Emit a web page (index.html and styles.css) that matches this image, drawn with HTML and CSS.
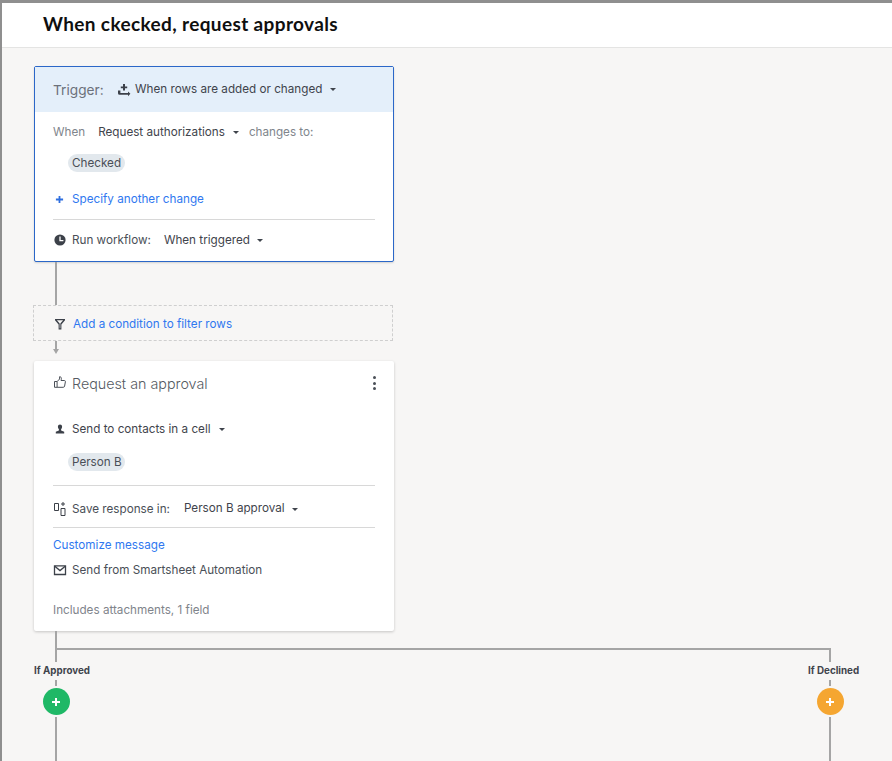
FILE: index.html
```html
<!DOCTYPE html>
<html lang="en">
<head>
<meta charset="utf-8">
<title>When ckecked, request approvals</title>
<link rel="stylesheet" href="styles.css">
</head>
<body>
<div class="frame">
  <header class="header"><h1 class="title">When ckecked, request approvals</h1></header>
  <main class="canvas">
    <section class="card trigger">
      <div class="trigger-head">
        <span class="trigger-label">Trigger:</span>
        <svg class="icon icon-add-rows" viewBox="0 0 14 14"><path d="M6 1h2v2.500h2.200v1.800H8V7.500H6V5.300H3.800V3.500H6z" fill="#3c4149"/><path d="M1 7.500h2.400v2.600h7.600V8.400L13.400 10.800 11 13.200v-1.400H2.600A1.600 1.600 0 0 1 1 10.200z" fill="#3c4149"/></svg>
        <span class="value head-value">When rows are added or changed</span>
        <span class="caret caret-head"></span>
      </div>
      <div class="trigger-body">
        <div class="row row-when">
          <span class="muted">When</span>
          <span class="value when-value">Request authorizations</span>
          <span class="caret caret-when"></span>
          <span class="muted">changes to:</span>
        </div>
        <div class="chip chip-checked">Checked</div>
        <div class="row row-specify">
          <svg class="icon-plus" viewBox="0 0 10 10"><path d="M4 1h2v3h3v2H6v3H4V6H1V4h3z" fill="#2f6fdf"/></svg>
          <a class="link">Specify another change</a>
        </div>
        <hr class="rule rule-trigger">
        <div class="row row-run">
          <svg class="icon" viewBox="0 0 14 14"><circle cx="7" cy="7" r="5.600" fill="#3c4149"/><path d="M7 3.500V7.600h3.400" fill="none" stroke="#fff" stroke-width="1.300"/></svg>
          <span class="label">Run workflow:</span>
          <span class="value run-value">When triggered</span>
          <span class="caret caret-run"></span>
        </div>
      </div>
    </section>
    <div class="line line-top"></div>
    <div class="condition">
      <svg class="icon icon-filter" viewBox="0 0 14 14"><path d="M2 2h10v1.200L8.400 7.400V12.500H5.600V7.400L2 3.200z M3.900 3.200 6.700 6.600V11.300h.6V6.600l2.800-3.400z" fill="#3c4149" fill-rule="evenodd"/></svg>
      <a class="link">Add a condition to filter rows</a>
    </div>
    <div class="line line-arrow"></div>
    <div class="arrow-head"></div>
    <section class="card approval">
      <div class="approval-head">
        <svg class="icon icon-thumb" viewBox="0 0 14 14"><path d="M1.500 6.500h2.600v5.800H1.500z M4.100 6.600 6.600 4V1.700c1.200 0 1.800.8 1.800 1.800 0 .7-.2 1.300-.4 2h3.400c.7 0 1.100.6 1 1.200l-.8 4.400c-.1.7-.6 1.200-1.300 1.200H4.100" fill="none" stroke="#4a4f57" stroke-width="1"/></svg>
        <span class="approval-title">Request an approval</span>
        <span class="kebab"><i></i><i></i><i></i></span>
      </div>
      <div class="row row-send">
        <svg class="icon" viewBox="0 0 14 14"><path d="M7 2.500a2.100 2.100 0 0 1 2.100 2.100c0 1.300-.6 2.200-1 2.700v1.100l3.100 1.300v1.800H2.800v-1.800l3.100-1.300V7.300c-.4-.5-1-1.400-1-2.700A2.100 2.100 0 0 1 7 2.500z" fill="#3c4149"/></svg>
        <span class="value">Send to contacts in a cell</span>
        <span class="caret caret-send"></span>
      </div>
      <div class="chip chip-person">Person B</div>
      <hr class="rule rule-person">
      <div class="row row-save">
        <svg class="icon icon-save" viewBox="0 0 14 16"><path d="M1.500 2.500h4v7h-4z M8 7.500h4v7H8z" fill="none" stroke="#3c4149" stroke-width="1"/><path d="M9.500 1h1v1.500H12v1h-1.500V5h-1V3.500H8v-1h1.500z" fill="#3c4149"/></svg>
        <span class="label save-label">Save response in:</span>
        <span class="value save-value">Person B approval</span>
        <span class="caret caret-save"></span>
      </div>
      <hr class="rule rule-save">
      <a class="link customize">Customize message</a>
      <div class="row row-from">
        <svg class="icon" viewBox="0 0 14 14"><path d="M1.500 2.800h11v8.700h-11z" fill="none" stroke="#3c4149" stroke-width="1.300"/><path d="M1.800 3.200 7 7.600l5.200-4.400" fill="none" stroke="#3c4149" stroke-width="1.300"/></svg>
        <span class="label">Send from Smartsheet Automation</span>
      </div>
      <div class="includes">Includes attachments, 1 field</div>
    </section>
    <div class="line line-stem"></div>
    <div class="hline"></div>
    <div class="branches">
      <div class="branch branch-yes">
        <div class="vseg seg-a"></div>
        <div class="branch-label">If Approved</div>
        <div class="vseg seg-b"></div>
        <div class="add add-green"><svg viewBox="0 0 10 10"><path d="M4 1h2v3h3v2H6v3H4V6H1V4h3z" fill="#fff"/></svg></div>
        <div class="vseg seg-c"></div>
      </div>
      <div class="branch branch-no">
        <div class="vseg seg-a"></div>
        <div class="branch-label">If Declined</div>
        <div class="vseg seg-b"></div>
        <div class="add add-orange"><svg viewBox="0 0 10 10"><path d="M4 1h2v3h3v2H6v3H4V6H1V4h3z" fill="#fff"/></svg></div>
        <div class="vseg seg-c"></div>
      </div>
    </div>
  </main>
</div>
</body>
</html>
```
FILE: styles.css
```css
* { box-sizing: border-box; }
html, body { margin: 0; padding: 0; }
body {
  width: 892px;
  height: 761px;
  overflow: hidden;
  font-family: Inter, "Liberation Sans", sans-serif;
  font-size: 11.7px;
  color: #3f444c;
}
.frame {
  width: 892px;
  height: 761px;
  background: #8f8f8f;
  padding: 3px 0 0 2px;
  display: flex;
  flex-direction: column;
}
.header {
  height: 45px;
  flex: none;
  background: #fff;
  border-bottom: 1px solid #e4e4e3;
  padding-left: 41px;
}
.title {
  margin: 0;
  font-family: Lato, "Liberation Sans", sans-serif;
  font-weight: 700;
  font-size: 19px;
  letter-spacing: .37px;
  line-height: 42px;
  color: #0f0f0f;
}
.canvas {
  flex: 1;
  min-height: 0;
  background: #f7f6f5;
  padding: 18px 0 0 32px;
  overflow: hidden;
}
.card { width: 360px; background: #fff; }
.trigger {
  height: 196px;
  border: 1px solid #2b67c8;
  border-radius: 2px;
  box-shadow: 0 1px 2px rgba(0,0,0,.15);
}
.trigger-head {
  height: 45px;
  background: #e4effa;
  display: flex;
  align-items: center;
  padding-left: 18px;
}
.trigger-label { font-size: 13.7px; color: #6c717a; width: 64px; line-height: 44px; }
.icon { width: 14px; height: 14px; flex: none; display: block; }
.icon-add-rows { margin-right: 4px; }
.head-value { position: relative; top: -1px; }
.value { color: #3f444c; white-space: nowrap; }
.label { color: #4a4f57; white-space: nowrap; }
.muted { color: #80858c; white-space: nowrap; }
.link { color: #2f78f0; white-space: nowrap; }
.caret {
  width: 0; height: 0; flex: none;
  border-left: 3px solid transparent;
  border-right: 3px solid transparent;
  border-top: 3px solid #3f444c;
}
.caret-head { margin-left: 8px; }
.trigger-body { padding: 0 18px; }
.row { display: flex; align-items: center; }
.row-when { height: 20px; margin-top: 10px; }
.when-value { margin-left: 13px; }
.caret-when { margin: 0 10px 0 8px; }
.chip {
  height: 18px;
  line-height: 18px;
  border-radius: 9px;
  background: #e2e8ed;
  padding: 0 4px;
  margin-left: 15px;
  color: #4a4f57;
  white-space: nowrap;
}
.chip-checked { width: 57px; margin-top: 12px; }
.row-specify { height: 20px; margin-top: 17px; }
.icon-plus { width: 9px; height: 9px; margin: 0 8px 0 2px; flex: none; }
.rule { height: 1px; border: 0; margin: 0; background: #d8d8d8; width: 322px; }
.rule-trigger { margin-top: 10px; }
.row-run { height: 20px; margin-top: 10px; }
.row-run .icon { margin-right: 5px; }
.run-value { margin-left: 13px; }
.caret-run { margin-left: 7px; }
.line { width: 2px; background: #a5a5a5; margin-left: 21px; }
.line-top { height: 43px; }
.condition {
  width: 360px;
  height: 36px;
  margin-left: -1px;
  border: 1px dashed #cfcfcf;
  display: flex;
  align-items: center;
  padding: 1px 0 0 19px;
}
.icon-filter { margin-right: 6px; }
.line-arrow { height: 9px; }
.arrow-head {
  width: 0; height: 0;
  margin: -1px 0 7px 19px;
  border-left: 3.5px solid transparent;
  border-right: 3.5px solid transparent;
  border-top: 5px solid #a5a5a5;
}
.approval {
  height: 270px;
  border-radius: 2px;
  box-shadow: 0 1px 3px rgba(0,0,0,.2);
  padding: 0 19px;
}
.approval-head { display: flex; align-items: center; height: 32px; padding-top: 12px; }
.icon-thumb { margin-right: 5px; margin-top: -2px; }
.approval-title { font-size: 14.3px; font-weight: 300; color: #555a62; flex: 1; }
.kebab { display: flex; flex-direction: column; gap: 2.5px; width: 3px; margin-right: -1px; }
.kebab i { display: block; width: 3px; height: 3px; border-radius: 50%; background: #4a4f57; }
.row-send { height: 20px; margin-top: 26px; }
.row-send .icon { margin-right: 5px; }
.caret-send { margin-left: 8px; }
.chip-person { width: 57px; margin-top: 14px; }
.rule-person { margin-top: 14px; }
.row-save { height: 20px; margin-top: 13px; }
.icon-save { height: 16px; margin-right: 5px; }
.save-value { margin-left: 14px; position: relative; top: -1px; }
.caret-save { margin-left: 7px; }
.rule-save { margin-top: 8px; }
.customize { display: block; margin-top: 8px; line-height: 18px; }
.row-from { height: 20px; margin-top: 6px; }
.row-from .icon { margin-right: 5px; }
.includes { margin-top: 20px; color: #7f848b; line-height: 20px; }
.line-stem { height: 17px; }
.hline { width: 776px; height: 2px; margin-left: 21px; background: #a5a5a5; }
.branches { display: flex; justify-content: space-between; width: 826px; }
.branch { display: flex; flex-direction: column; height: 120px; }
.branch-yes { width: 57px; }
.branch-no { width: 52px; }
.vseg { width: 2px; background: #a5a5a5; flex: none; margin-left: 21px; }
.seg-a { height: 12px; }
.seg-b { height: 6px; margin-bottom: 2px; }
.seg-c { height: 60px; margin-top: 2px; }
.branch-label { font-size: 9.8px; font-weight: 700; line-height: 18px; color: #3f444c; white-space: nowrap; }
.add {
  width: 27px; height: 27px; border-radius: 50%;
  margin-left: 8.5px;
  display: flex; align-items: center; justify-content: center;
  flex: none;
}
.add svg { width: 10px; height: 10px; display: block; }
.add-green { background: #1fb866; }
.add-orange { background: #f5a631; }
```
